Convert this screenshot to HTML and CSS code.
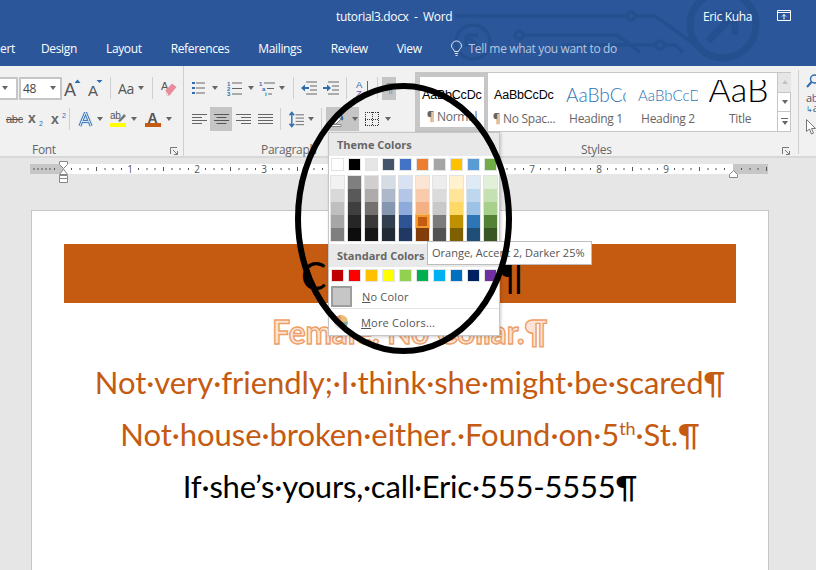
FILE: index.html
```html
<!DOCTYPE html>
<html lang="en">
<head>
  <meta charset="UTF-8" />
  <meta name="viewport" content="width=device-width, initial-scale=1.0" />
  <title>tutorial3.docx - Word</title>
  <link rel="stylesheet" href="styles.css">
</head>
<body>
  <header class="header">
    <svg class="circuit" width="816" height="66" viewBox="0 0 816 66">
      <g fill="none" stroke="#24508f" stroke-width="3.500">
        <circle cx="473" cy="42" r="17" />
        <path d="M466 35h12M466 35v12M466 35l15 15" />
        <circle cx="519" cy="35" r="4" />
        <path d="M523 35h94l23 17" />
        <circle cx="631" cy="16" r="4" />
        <path d="M455 16h172M635 16h20l50 36" />
        <circle cx="660" cy="45" r="4" />
        <path d="M560 50l5-5h91M664 45h11l8 7" />
        <circle cx="723" cy="25" r="33" stroke-width="7" />
        <path d="M708 41l26-26M714 14h21v21" stroke-width="7" />
      </g>
    </svg>
    <div class="titlebar">
      <span class="doc-title">tutorial3.docx &nbsp;-&nbsp; Word</span>
      <span class="user">Eric Kuha</span>
      <svg class="share" width="14" height="11" viewBox="0 0 14 11">
        <path d="M.5.5h13v10H.5zM.5 2.500h13M7 9.500V4.500M5 6.500l2-2 2 2" fill="none" stroke="#fff" />
      </svg>
    </div>
    <nav class="tabs">
      <span class="tab-cut">ert</span>
      <span>Design</span>
      <span>Layout</span>
      <span>References</span>
      <span>Mailings</span>
      <span>Review</span>
      <span>View</span>
      <svg class="bulb" width="11" height="15" viewBox="0 0 11 15">
        <path d="M3.500 10.500C3 8 .5 7.500.5 5a5 5 0 0 1 10 0c0 2.500-2.500 3-3 5.500zM3.800 12.500h3.400M4.500 14.500h2" fill="none" stroke="#dfe6f1" />
      </svg>
      <span class="tell">Tell me what you want to do</span>
    </nav>
  </header>

  <section class="ribbon">
    <div class="group group-font">
      <div class="row">
        <div class="combo combo-a"><i class="caret"></i></div>
        <div class="combo combo-b"><span>48</span><i class="caret"></i></div>
        <div class="tool w22">
          <svg width="20" height="18" viewBox="0 0 20 18">
            <text x="1" y="17" class="ico-a big">A</text>
            <path d="M11.500 4l3-3.500 3 3.500z" fill="#2b6cb0" />
          </svg>
        </div>
        <div class="tool w22">
          <svg width="20" height="18" viewBox="0 0 20 18">
            <text x="3" y="17" class="ico-a">A</text>
            <path d="M11.500 1h6l-3 3z" fill="#2b6cb0" />
          </svg>
        </div>
        <i class="sep s-aa"></i>
        <div class="tool w36 tool-aa"><span class="aa">Aa</span><i class="caret"></i></div>
        <i class="sep s-clear"></i>
        <div class="tool w22">
          <svg width="16" height="17" viewBox="0 0 16 17">
            <text x="0" y="10" class="ico-a small">A</text>
            <path d="M4 11l7-7.500 4.500 3.500-7 8.500H6z" fill="#ea8b9b" />
            <path d="M4 11l3 4" stroke="#fff" />
          </svg>
        </div>
      </div>
      <div class="row row-format">
        <div class="tool w22">
          <svg width="18" height="12" viewBox="0 0 18 12">
            <text x="0" y="10" class="ico-abc">abc</text>
            <path d="M0 6.500h17" stroke="#555" />
          </svg>
        </div>
        <div class="tool w22">
          <svg width="18" height="14" viewBox="0 0 18 14">
            <text x="0" y="11" class="ico-x">x</text>
            <text x="11" y="14" class="ico-sub">2</text>
          </svg>
        </div>
        <div class="tool w22">
          <svg width="18" height="14" viewBox="0 0 18 14">
            <text x="1" y="12" class="ico-x">x</text>
            <text x="12" y="6" class="ico-sub">2</text>
          </svg>
        </div>
        <i class="sep s-effects"></i>
        <div class="tool w26 tight">
          <svg width="15" height="17" viewBox="0 0 16 17">
            <path d="M8 1L2 15.500M8 1l6 14.500M4.500 10.500h7" fill="none" stroke="#c3d8ee" stroke-width="4.500" />
            <path d="M8 1L2 15.500M8 1l6 14.500M4.500 10.500h7" fill="none" stroke="#2f6db0" stroke-width="2.800" />
            <path d="M8 1L2 15.500M8 1l6 14.500M4.500 10.500h7" fill="none" stroke="#fff" stroke-width="1" />
          </svg>
          <i class="caret"></i>
        </div>
        <div class="tool w30 tight push5">
          <svg width="17" height="16" viewBox="0 0 17 16">
            <text x="0" y="8" class="ico-ab">ab</text>
            <path d="M8 10l6-7 2 2-6 6z" fill="#777" />
            <rect y="12" width="16" height="4" fill="#ffff00" />
          </svg>
          <i class="caret"></i>
        </div>
        <div class="tool w30 tight push5">
          <svg width="17" height="16" viewBox="0 0 17 16">
            <text x="2.500" y="12" class="ico-a color">A</text>
            <rect y="12" width="16" height="4" fill="#c55a11" />
          </svg>
          <i class="caret"></i>
        </div>
      </div>
      <div class="group-label">Font<svg class="launcher" width="8" height="8" viewBox="0 0 8 8"><path d="M.5 7V.5H7M3 3l4 4M4 7.500h3.500V4" fill="none" stroke="#777" /></svg></div>
    </div>

    <div class="group group-para">
      <div class="row row-lists">
        <div class="tool w34">
          <svg width="14" height="14" viewBox="0 0 14 14">
            <path d="M4 2h9M4 7h9M4 12h9" stroke="#666" />
            <path d="M0 1h3v2H0zM0 6h3v2H0zM0 11h3v2H0z" fill="#2f6db0" />
          </svg>
          <i class="caret"></i>
        </div>
        <div class="tool w34 push1">
          <svg width="15" height="15" viewBox="0 0 15 15">
            <path d="M5 2h10M5 7.500h10M5 13h10" stroke="#666" />
            <text x="0" y="5" class="ico-num">1</text>
            <text x="0" y="10" class="ico-num">2</text>
            <text x="0" y="15" class="ico-num">3</text>
          </svg>
          <i class="caret"></i>
        </div>
        <div class="tool w30 tight">
          <svg width="16" height="15" viewBox="0 0 16 15">
            <path d="M5 2h11M8 7.500h7M9 13h4" stroke="#666" />
            <text x="0" y="5" class="ico-num">1</text>
            <text x="3" y="10" class="ico-num">a</text>
            <text x="6" y="15" class="ico-num">i</text>
          </svg>
          <i class="caret"></i>
        </div>
        <i class="sep s-indent"></i>
        <div class="tool w22">
          <svg width="16" height="14" viewBox="0 0 16 14">
            <path d="M5 1h11M9 5h7M9 9h7M5 13h11" stroke="#666" />
            <path d="M0 7l4-3.500V6h4v2H4v2.500z" fill="#2f6db0" />
          </svg>
        </div>
        <div class="tool w22">
          <svg width="16" height="14" viewBox="0 0 16 14">
            <path d="M5 1h11M9 5h7M9 9h7M5 13h11" stroke="#666" />
            <path d="M8 7L4 3.500V6H0v2h4v2.500z" fill="#2f6db0" />
          </svg>
        </div>
        <i class="sep s-sort"></i>
        <div class="tool w22">
          <svg width="14" height="17" viewBox="0 0 14 17">
            <text x="0" y="8" class="ico-sort az-a">A</text>
            <text x="0" y="17" class="ico-sort az-z">Z</text>
            <path d="M11.500 1v13" stroke="#666" />
          </svg>
        </div>
        <i class="sep s-pilcrow"></i>
        <div class="tool w14 active para-mark"><span>¶</span></div>
      </div>
      <div class="row row-align">
        <div class="tool w22">
          <svg width="15" height="11" viewBox="0 0 15 11"><path d="M0 .5h15M0 3.500h10M0 6.500h15M0 9.500h10" stroke="#666" /></svg>
        </div>
        <div class="tool w22 active">
          <svg width="15" height="11" viewBox="0 0 15 11"><path d="M0 .5h15M2.500 3.500h10M0 6.500h15M2.500 9.500h10" stroke="#555" /></svg>
        </div>
        <div class="tool w22">
          <svg width="15" height="11" viewBox="0 0 15 11"><path d="M0 .5h15M5 3.500h10M0 6.500h15M5 9.500h10" stroke="#666" /></svg>
        </div>
        <div class="tool w22">
          <svg width="15" height="11" viewBox="0 0 15 11"><path d="M0 .5h15M0 3.500h15M0 6.500h15M0 9.500h15" stroke="#666" /></svg>
        </div>
        <i class="sep s-spacing"></i>
        <div class="tool w32 gap4">
          <svg width="15" height="17" viewBox="0 0 16 17">
            <path d="M7 3.500h9M7 7h9M7 10.500h9M7 14h9" stroke="#666" />
            <path d="M3 1v15M.5 4L3 1l2.500 3M.5 13L3 16l2.500-3" fill="none" stroke="#2f6db0" stroke-width="1.500" />
          </svg>
          <i class="caret"></i>
        </div>
        <i class="sep s-shade"></i>
        <div class="tool w33 active">
          <svg width="19" height="16" viewBox="0 0 19 16">
            <path d="M3 10l6-6 5 4-5 5H5z" fill="#fff" stroke="#777" />
            <path d="M14 3c2 2 3 4 2 6-1 1-2 0-2-1z" fill="#2f6db0" />
            <path d="M1 13.500h13v2H1z" fill="#fff" stroke="#888" />
          </svg>
          <i class="caret"></i>
        </div>
        <div class="tool w30 borders">
          <svg width="14" height="14" viewBox="0 0 14 14" shape-rendering="crispEdges">
            <path d="M0 .5h14M0 13.500h14M.5 0v14M13.500 0v14M0 7.500h14M7.500 0v14" fill="none" stroke="#333" stroke-dasharray="1 1" />
          </svg>
          <i class="caret"></i>
        </div>
      </div>
      <div class="group-label">Paragraph</div>
    </div>

    <div class="group group-styles">
      <div class="gallery">
        <div class="style selected"><span class="sample s-normal">AaBbCcDc</span><span class="style-name">¶ Normal</span></div>
        <div class="style"><span class="sample s-normal">AaBbCcDc</span><span class="style-name">¶ No Spac...</span></div>
        <div class="style"><span class="sample s-h1">AaBbCc</span><span class="style-name">Heading 1</span></div>
        <div class="style"><span class="sample s-h2">AaBbCcD</span><span class="style-name">Heading 2</span></div>
        <div class="style"><span class="sample s-title">AaB</span><span class="style-name">Title</span></div>
        <div class="gallery-scroll">
          <div class="scroll-btn up"><i class="caret caret-up"></i></div>
          <div class="scroll-btn"><i class="caret"></i></div>
          <div class="scroll-btn more"><b></b><i class="caret"></i></div>
        </div>
      </div>
      <div class="group-label">Styles<svg class="launcher" width="8" height="8" viewBox="0 0 8 8"><path d="M.5 7V.5H7M3 3l4 4M4 7.500h3.500V4" fill="none" stroke="#777" /></svg></div>
    </div>

    <div class="group group-edit">
      <svg width="14" height="14" viewBox="0 0 14 14">
        <circle cx="8.500" cy="5" r="4" fill="none" stroke="#2f6db0" stroke-width="1.500" />
        <path d="M5.500 8L1 13" stroke="#2f6db0" stroke-width="2" />
      </svg>
      <div class="replace"><span>a<em>b</em></span><span><u>↳</u>a</span></div>
      <svg width="10" height="16" viewBox="0 0 10 16">
        <path d="M.5.500v12l3-2.500 2 5 2-1-2-4.500h4z" fill="#fff" stroke="#777" />
      </svg>
    </div>
  </section>

  <div class="ruler-area">
    <svg class="ruler" width="738" height="22" viewBox="0 0 738 22">
      <defs>
        <pattern id="inch" x="33" y="0" width="67" height="10" patternUnits="userSpaceOnUse">
          <path d="M8.500 4v2M17 4v2M25 4v2M33.500 3v4M42 4v2M50 4v2M58.500 4v2" stroke="#555" />
        </pattern>
      </defs>
      <rect y="3" width="738" height="10" fill="#fff" />
      <rect y="3" width="33" height="10" fill="#c6c6c6" />
      <rect x="703" y="3" width="35" height="10" fill="#c6c6c6" />
      <g transform="translate(0 3)"><rect width="738" height="10" fill="url(#inch)" /></g>
      <path d="M4 7v2M12 7v2M20 7v2" stroke="#555" />
      <g class="ruler-nums">
        <text x="100" y="12">1</text>
        <text x="167" y="12">2</text>
        <text x="234" y="12">3</text>
        <text x="301" y="12">4</text>
        <text x="368" y="12">5</text>
        <text x="435" y="12">6</text>
        <text x="502" y="12">7</text>
        <text x="569" y="12">8</text>
        <text x="636" y="12">9</text>
      </g>
      <path d="M29.500.5h8v3l-4 4-4-4zM29.500 14.500h8v3h-8zM29.500 17.500h8v4h-8zM33.500 8l4 5.500h-8z" fill="#fff" stroke="#888" />
      <path d="M703.500 9.500l-4 4v3h8v-3z" fill="#fff" stroke="#888" />
    </svg>
  </div>

  <main class="page">
    <div class="banner">Cat Found!¶</div>
    <p class="line line-outline">Female. No Collar.¶</p>
    <p class="line line-orange">Not·very·friendly;·I·think·she·might·be·scared¶</p>
    <p class="line line-orange">Not·house·broken·either.·Found·on·5<sup>th</sup>·St.¶</p>
    <p class="line line-black">If·she’s·yours,·call·Eric·555-5555¶</p>
  </main>

  <div class="color-menu">
    <div class="menu-head">Theme Colors</div>
    <div class="swatch-row">
      <span class="swatch" style="background:#ffffff"></span>
      <span class="swatch" style="background:#000000"></span>
      <span class="swatch" style="background:#e7e6e6"></span>
      <span class="swatch" style="background:#44546a"></span>
      <span class="swatch" style="background:#4472c4"></span>
      <span class="swatch" style="background:#ed7d31"></span>
      <span class="swatch" style="background:#a5a5a5"></span>
      <span class="swatch" style="background:#ffc000"></span>
      <span class="swatch" style="background:#5b9bd5"></span>
      <span class="swatch" style="background:#70ad47"></span>
    </div>
    <div class="shade-grid">
      <div class="shade-col"><span style="background:#f2f2f2"></span><span style="background:#d9d9d9"></span><span style="background:#bfbfbf"></span><span style="background:#a6a6a6"></span><span style="background:#7f7f7f"></span></div>
      <div class="shade-col"><span style="background:#7f7f7f"></span><span style="background:#595959"></span><span style="background:#3f3f3f"></span><span style="background:#262626"></span><span style="background:#0d0d0d"></span></div>
      <div class="shade-col"><span style="background:#d0cece"></span><span style="background:#afabab"></span><span style="background:#757070"></span><span style="background:#3a3838"></span><span style="background:#171616"></span></div>
      <div class="shade-col"><span style="background:#d6dce4"></span><span style="background:#adb9ca"></span><span style="background:#8496b0"></span><span style="background:#323f4f"></span><span style="background:#222a35"></span></div>
      <div class="shade-col"><span style="background:#d9e2f3"></span><span style="background:#b4c6e7"></span><span style="background:#8eaadb"></span><span style="background:#2f5496"></span><span style="background:#1f3864"></span></div>
      <div class="shade-col"><span style="background:#fbe5d5"></span><span style="background:#f7cbac"></span><span style="background:#f4b183"></span><span class="picked" style="background:#c55a11"></span><span style="background:#833c0b"></span></div>
      <div class="shade-col"><span style="background:#ededed"></span><span style="background:#dbdbdb"></span><span style="background:#c9c9c9"></span><span style="background:#7b7b7b"></span><span style="background:#525252"></span></div>
      <div class="shade-col"><span style="background:#fff2cc"></span><span style="background:#fee599"></span><span style="background:#ffd965"></span><span style="background:#bf9000"></span><span style="background:#7f6000"></span></div>
      <div class="shade-col"><span style="background:#deeaf6"></span><span style="background:#bdd7ee"></span><span style="background:#9cc3e5"></span><span style="background:#2e75b5"></span><span style="background:#1f4e79"></span></div>
      <div class="shade-col"><span style="background:#e2efd9"></span><span style="background:#c5e0b3"></span><span style="background:#a8d08d"></span><span style="background:#538135"></span><span style="background:#375623"></span></div>
    </div>
    <div class="menu-head menu-head-std">Standard Colors</div>
    <div class="swatch-row">
      <span class="swatch" style="background:#c00000"></span>
      <span class="swatch" style="background:#ff0000"></span>
      <span class="swatch" style="background:#ffc000"></span>
      <span class="swatch" style="background:#ffff00"></span>
      <span class="swatch" style="background:#92d050"></span>
      <span class="swatch" style="background:#00b050"></span>
      <span class="swatch" style="background:#00b0f0"></span>
      <span class="swatch" style="background:#0070c0"></span>
      <span class="swatch" style="background:#002060"></span>
      <span class="swatch" style="background:#7030a0"></span>
    </div>
    <div class="menu-item no-color"><i class="no-color-box"></i><span><u>N</u>o Color</span></div>
    <div class="menu-item more-colors">
      <svg width="14" height="14" viewBox="0 0 14 14">
        <path d="M7 7V0a7 7 0 0 1 7 7z" fill="#e8bd7c" />
        <path d="M7 7h7a7 7 0 0 1-7 7z" fill="#7fb0a6" />
        <path d="M7 7v7a7 7 0 0 1-7-7z" fill="#e2e2e2" />
        <path d="M7 7H0a7 7 0 0 1 7-7z" fill="#e59a63" />
      </svg>
      <span><u>M</u>ore Colors...</span>
    </div>
  </div>

  <div class="tooltip">Orange, Accent 2, Darker 25%</div>

  <svg class="ring" width="816" height="570" viewBox="0 0 816 570">
    <ellipse cx="403.500" cy="218.500" rx="105.500" ry="132.500" fill="none" stroke="#000" stroke-width="6" />
  </svg>
</body>
</html>
```

FILE: styles.css
```css
* {
  box-sizing: border-box;
}
html, body {
  margin: 0;
  height: 570px;
  overflow: hidden;
}
body {
  position: relative;
  width: 816px;
  background: #e6e6e6;
  font-family: "Open Sans", "Noto Sans", sans-serif;
  font-size: 12px;
  color: #444;
}
i, em {
  font-style: normal;
}
svg {
  flex: none;
  overflow: visible;
}

/* title bar and tabs */
.header {
  position: relative;
  height: 66px;
  background: #2b579a;
  color: #fff;
  letter-spacing: -.35px;
  overflow: hidden;
}
.circuit {
  position: absolute;
  left: 0;
  top: 0;
}
.titlebar {
  position: relative;
  height: 33px;
  display: flex;
  align-items: center;
  padding-bottom: 1px;
}
.doc-title {
  margin-left: 336px;
}
.user {
  margin-left: auto;
  margin-right: 25px;
}
.share {
  margin-right: 25px;
  margin-bottom: 1px;
}
.tabs {
  position: relative;
  height: 33px;
  display: flex;
  align-items: center;
  gap: 29px;
  padding-bottom: 2px;
}
.tab-cut {
  width: 12px;
}
.bulb {
  margin-right: -22px;
}
.tell {
  color: #b7c7df;
}

/* ribbon */
.ribbon {
  height: 92px;
  display: flex;
  background: #f1f1f1;
  border-bottom: 2px solid #d8d8d8;
  letter-spacing: -.3px;
}
.group {
  position: relative;
  padding-top: 10px;
}
.group-font {
  width: 183px;
}
.group-para {
  width: 231px;
  padding-left: 1px;
  border-left: 1px solid #cfcfcf;
}
.group-styles {
  width: 384px;
  padding-top: 6px;
}
.group-edit {
  width: 18px;
  margin-top: 4px;
  height: 84px;
  border-left: 1px solid #cfcfcf;
  padding: 4px 0 0 7px;
  display: flex;
  flex-direction: column;
  gap: 5px;
}
.row {
  display: flex;
  align-items: center;
  height: 24px;
  margin-bottom: 7px;
}
.row-format {
  padding-left: 4px;
}
.row-lists {
  padding-left: 3px;
}
.row-align {
  padding-left: 3px;
}
.tool {
  height: 24px;
  display: flex;
  align-items: center;
  justify-content: center;
  gap: 6px;
  flex: none;
}
.tight { gap: 3.5px; }
.gap4 { gap: 4px; }
.push1 { margin-left: 1px; }
.push5 { margin-left: 5px; }
.w14 { width: 14px; }
.w22 { width: 22px; }
.w26 { width: 26px; }
.w30 { width: 30px; }
.w32 { width: 32px; }
.w33 { width: 33px; }
.w34 { width: 34px; }
.w36 { width: 36px; }
.active {
  background: #c5c5c5;
}
.caret {
  width: 0;
  height: 0;
  flex: none;
  border-left: 3.5px solid transparent;
  border-right: 3.5px solid transparent;
  border-top: 4px solid #666;
}
.caret-up {
  border-top: 0;
  border-bottom: 4px solid #c4c4c4;
}
.sep {
  flex: none;
  width: 1px;
  height: 22px;
  background: #cfcfcf;
}
.s-aa { margin: 0 2px 0 4px; }
.s-clear { margin: 0 5px 0 3px; }
.s-effects { margin: 0 7.5px 0 -1px; }
.s-indent { margin: 0 4px 0 6px; }
.s-sort { margin: 0 5px 0 4px; }
.s-pilcrow { margin: 0 4px 0 3px; }
.s-spacing { margin: 0 4px 0 4px; }
.s-shade { margin: 0 4px 0 4px; }
.combo {
  height: 23px;
  flex: none;
  display: flex;
  align-items: center;
  justify-content: space-between;
  background: #fff;
  border: 2px solid #c6c6c6;
  font-size: 12px;
  padding: 0 4px 0 2px;
}
.combo-a {
  width: 18px;
  border-left: 0;
}
.combo-b {
  width: 43px;
  margin-left: 1px;
}
.aa {
  font-size: 14px;
  color: #555;
}
.tool-aa {
  gap: 4px;
}
.para-mark {
  color: #8a8a8a;
  font-size: 13px;
  height: 23px;
}
.borders {
  margin-left: 4px;
}
.ico-a {
  font-family: "Liberation Sans", sans-serif;
  font-size: 15px;
  fill: #555;
}
.ico-a.big {
  font-size: 18px;
}
.ico-a.small {
  font-size: 11px;
}
.ico-a.color {
  font-size: 14px;
  font-weight: bold;
}
.ico-abc {
  font-family: "Liberation Sans", sans-serif;
  font-size: 11px;
  fill: #555;
}
.ico-x {
  font-family: "Liberation Sans", sans-serif;
  font-size: 14px;
  font-weight: bold;
  fill: #666;
}
.ico-sub {
  font-family: "Liberation Sans", sans-serif;
  font-size: 7px;
  fill: #2f6db0;
}
.ico-ab {
  font-family: "Liberation Sans", sans-serif;
  font-size: 10px;
  fill: #555;
}
.ico-num {
  font-family: "Liberation Sans", sans-serif;
  font-size: 6px;
  font-weight: bold;
  fill: #2f6db0;
}
.ico-sort {
  font-family: "Liberation Sans", sans-serif;
  font-size: 9.500px;
}
.az-a { fill: #2f6db0; }
.az-z { fill: #7b4fa8; }
.group-label {
  position: absolute;
  left: 0;
  right: 0;
  top: 76px;
  height: 16px;
  line-height: 16px;
  text-align: center;
  font-size: 12px;
  color: #666;
}
.group-font .group-label {
  text-align: left;
  padding-left: 32px;
}
.group-para .group-label {
  text-align: left;
  padding-left: 77px;
}
.group-styles .group-label {
  text-align: left;
  padding-left: 167px;
}
.launcher {
  position: absolute;
  right: 5px;
  top: 5px;
}
.group-styles .launcher {
  right: 8px;
}
.gallery {
  display: flex;
  width: 376px;
  height: 60px;
  margin-left: 1px;
  background: #fff;
  border: 1px solid #c6c6c6;
}
.style {
  width: 72px;
  flex: none;
  display: flex;
  flex-direction: column;
  align-items: center;
  overflow: hidden;
  padding: 5px 4px 0;
}
.style.selected {
  border: 4px solid #c6c6c6;
  padding: 1px 0 0;
}
.sample {
  height: 31px;
  line-height: 34px;
  width: 60px;
  overflow: hidden;
  white-space: nowrap;
  color: #000;
}
.s-normal {
  font-family: "Liberation Sans", sans-serif;
  font-size: 12.500px;
  letter-spacing: -.2px;
}
.s-h1 {
  font-family: "Lato", sans-serif;
  font-weight: 300;
  font-size: 19px;
  letter-spacing: 0;
  color: #2e74b5;
}
.s-h2 {
  font-family: "Lato", sans-serif;
  font-weight: 300;
  font-size: 15px;
  letter-spacing: 0;
  color: #2e74b5;
}
.s-title {
  font-family: "Lato", sans-serif;
  font-weight: 300;
  font-size: 34px;
  letter-spacing: 0;
  height: 22px;
  line-height: 18px;
  margin: 2px 0 7px -3px;
}
.style-name {
  font-size: 12px;
  color: #666;
  line-height: 20px;
  white-space: nowrap;
}
.gallery-scroll {
  width: 14px;
  flex: none;
  margin-left: 1px;
  display: flex;
  flex-direction: column;
  border-left: 1px solid #c6c6c6;
}
.scroll-btn {
  flex: 1;
  display: flex;
  flex-direction: column;
  align-items: center;
  justify-content: center;
  gap: 2px;
  border-top: 1px solid #c6c6c6;
}
.scroll-btn.up {
  background: #e6e6e6;
  border-top: 0;
}
.scroll-btn.more b {
  width: 7px;
  height: 1px;
  background: #666;
}
.replace {
  display: flex;
  flex-direction: column;
  font-size: 11px;
  line-height: 10px;
  color: #555;
}
.replace em {
  color: #7b4fa8;
}
.replace u {
  text-decoration: none;
  color: #2f6db0;
  font-size: 8px;
}

/* ruler */
.ruler-area {
  height: 52px;
  padding: 3px 0 0 30px;
}
.ruler {
  display: block;
}
.ruler-nums text {
  font-size: 10px;
  fill: #555;
  text-anchor: middle;
}

/* document page */
.page {
  margin-left: 31px;
  width: 738px;
  height: 360px;
  padding: 33px 32px 0;
  background: #fff;
  border: 1px solid #c6c6c6;
  border-bottom: 0;
  font-family: "Lato", sans-serif;
  text-align: center;
}
.banner {
  height: 59px;
  line-height: 62px;
  padding-left: 28px;
  background: #c55a11;
  color: #000;
  font-size: 38px;
  letter-spacing: 1.5px;
}
.line {
  margin: 0;
  height: 52px;
  line-height: 52px;
  padding-left: 20px;
  font-size: 31px;
  letter-spacing: -.05px;
  white-space: nowrap;
}
.line-outline {
  height: 53px;
  padding-top: 3px;
  font-size: 31.500px;
  font-weight: bold;
  color: #fbe4d5;
  -webkit-text-stroke: 1.4px #ee9f68;
}
.line-orange {
  color: #c55a11;
}
.line-black {
  color: #000;
  letter-spacing: -.2px;
}
sup {
  font-size: 18px;
  line-height: 0;
}

/* shading dropdown */
.color-menu {
  position: absolute;
  left: 328px;
  top: 132px;
  width: 172px;
  height: 204px;
  background: #fff;
  border: 1px solid #c6c6c6;
  box-shadow: 1px 1px 3px rgba(0,0,0,0.2);
}
.menu-head {
  height: 23px;
  line-height: 23px;
  padding-left: 8px;
  background: #e9e9e9;
  font-weight: bold;
  font-size: 11px;
  color: #666;
}
.menu-head-std {
  margin-top: 3px;
}
.swatch-row {
  display: flex;
  gap: 4px;
  padding: 2px 0 0 2px;
  height: 16px;
}
.swatch {
  width: 13px;
  height: 13px;
  border: 1px solid #e2e3e3;
  flex: none;
}
.shade-grid {
  display: flex;
  gap: 4px;
  padding: 4px 0 0 2px;
  height: 69px;
}
.shade-col {
  width: 13px;
  height: 65px;
  display: flex;
  flex-direction: column;
  box-shadow: 0 0 0 1px #e2e3e3;
}
.shade-col span {
  height: 13px;
  flex: none;
}
.shade-col .picked {
  border: 2px solid #f29a2e;
  box-shadow: 0 0 0 1px #f7b860;
}
.menu-item {
  display: flex;
  align-items: center;
  font-size: 11px;
  letter-spacing: .2px;
  color: #555;
}
.no-color {
  height: 24px;
  margin-top: 1px;
  margin-left: 2px;
  gap: 10px;
}
.no-color-box {
  width: 21px;
  height: 21px;
  background: #c6c6c6;
  border: 2px solid #9d9d9d;
}
.more-colors {
  height: 27px;
  padding-left: 5px;
  gap: 13px;
  border-top: 1px solid #e2e3e3;
}

/* tooltip and hand drawn ring */
.tooltip {
  position: absolute;
  left: 427px;
  top: 241px;
  width: 165px;
  height: 24px;
  line-height: 21px;
  padding-left: 4px;
  background: #fff;
  border: 1px solid #bdbdbd;
  font-size: 11px;
  color: #555;
  white-space: nowrap;
}
.ring {
  position: absolute;
  left: 0;
  top: 0;
}
```
